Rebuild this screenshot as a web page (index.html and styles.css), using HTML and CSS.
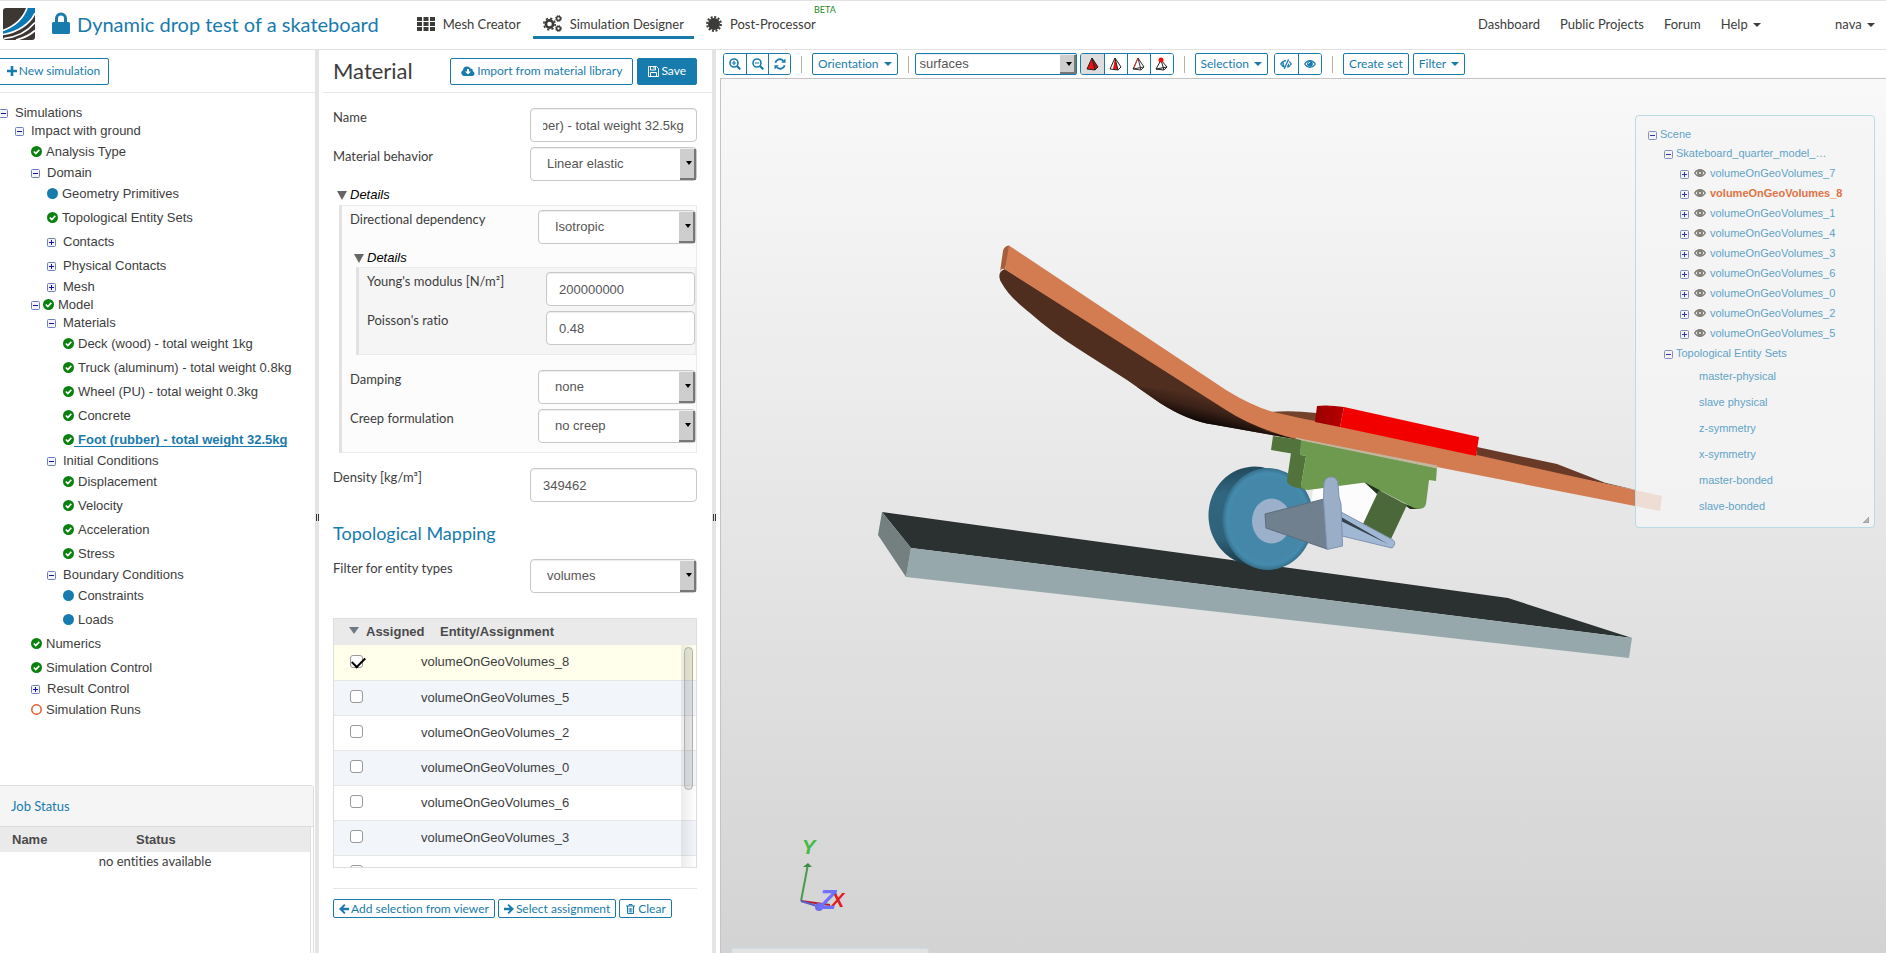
FILE: index.html
```
<!DOCTYPE html>
<html lang="en">
<head>
<meta charset="utf-8">
<title>Dynamic drop test of a skateboard</title>
<link rel="stylesheet" href="styles.css">
</head>
<body>
<svg class="defs" aria-hidden="true">
  <symbol id="lock" viewBox="0 0 18 22"><path d="M1.500 10H3V6.500a6 6 0 0 1 12 0V10h1.500A1.500 1.500 0 0 1 18 11.500v9a1.500 1.500 0 0 1-1.500 1.500h-15A1.500 1.500 0 0 1 0 20.500v-9A1.500 1.500 0 0 1 1.500 10zM6 10h6V6.500a3 3 0 0 0-6 0z"/></symbol>
  <symbol id="th" viewBox="0 0 18 14"><path d="M0 0h5v4H0zM6.500 0h5v4h-5zM13 0h5v4h-5zM0 5h5v4H0zM6.500 5h5v4h-5zM13 5h5v4h-5zM0 10h5v4H0zM6.500 10h5v4h-5zM13 10h5v4h-5z"/></symbol>
  <symbol id="cogs" viewBox="0 0 19 17"><g fill="none" stroke="currentColor"><circle cx="6.500" cy="9" r="3.600" stroke-width="2.600"/><circle cx="6.500" cy="9" r="5.700" stroke-width="1.600" stroke-dasharray="2.200 2.277"/><circle cx="15.500" cy="3.500" r="1.900" stroke-width="1.500"/><circle cx="15.500" cy="3.500" r="3" stroke-width="1" stroke-dasharray="1.200 1.156"/><circle cx="15.500" cy="13.500" r="1.900" stroke-width="1.500"/><circle cx="15.500" cy="13.500" r="3" stroke-width="1" stroke-dasharray="1.200 1.156"/></g></symbol>
  <symbol id="cert" viewBox="0 0 16 16"><circle cx="8" cy="8" r="6"/><circle cx="8" cy="8" r="6.800" fill="none" stroke="currentColor" stroke-width="2.200" stroke-dasharray="2 1.560"/></symbol>
  <symbol id="plus" viewBox="0 0 10 10"><path d="M3.700 0h2.600v3.700H10v2.600H6.300V10H3.700V6.300H0V3.700h3.700z"/></symbol>
  <symbol id="cloud" viewBox="0 0 14 10"><path fill-rule="evenodd" d="M3 10a3 3 0 0 1-1-5.700A4 4 0 0 1 9.500 2.500a2.200 2.200 0 0 1 2.300 2.700A2.500 2.500 0 0 1 11.500 10zM6 3v2.500H4L7 8.600l3-3.100H8V3z"/></symbol>
  <symbol id="save" viewBox="0 0 11 11"><g fill="none" stroke="currentColor"><path d="M.5.5h8l2 2v8H.5z"/><path d="M2.500.500v3.500h5V.500M2.500 10.500V6.500h6v4M6 1v2"/></g></symbol>
  <symbol id="zoomin" viewBox="0 0 12 12"><g fill="none" stroke="currentColor"><circle cx="5" cy="5" r="4" stroke-width="1.600"/><path d="M8 8l3.300 3.300" stroke-width="2.200"/><path d="M2.800 5h4.400M5 2.800v4.400" stroke-width="1.200"/></g></symbol>
  <symbol id="zoomout" viewBox="0 0 12 12"><g fill="none" stroke="currentColor"><circle cx="5" cy="5" r="4" stroke-width="1.600"/><path d="M8 8l3.300 3.300" stroke-width="2.200"/><path d="M2.800 5h4.400" stroke-width="1.200"/></g></symbol>
  <symbol id="refresh" viewBox="0 0 12 12"><path fill="none" stroke="currentColor" stroke-width="1.800" d="M1.300 4.800a4.700 4.700 0 0 1 8-2M10.700 7.200a4.700 4.700 0 0 1-8 2"/><path d="M11.500.500v4.300H7.200zM.500 11.500V7.200h4.300z"/></symbol>
  <symbol id="eye" viewBox="0 0 12 8"><path fill="none" stroke="currentColor" stroke-width="1.200" d="M.7 4C2 1.800 3.800.700 6 .700S10 1.800 11.300 4C10 6.200 8.200 7.300 6 7.300S2 6.200.700 4z"/><circle cx="6" cy="3.800" r="2.900"/><path d="M4.500 3.800A1.500 1.500 0 0 1 6 2.300" fill="none" stroke="#fff" stroke-width=".8"/></symbol>
  <symbol id="view" viewBox="0 0 12 8"><path fill="none" stroke="currentColor" stroke-width="1.400" d="M.7 4C2 1.800 3.800.700 6 .700S10 1.800 11.300 4C10 6.200 8.200 7.300 6 7.300S2 6.200.700 4z"/><circle cx="6" cy="4" r="2" fill="none" stroke="currentColor" stroke-width="2"/></symbol>
  <symbol id="eyeoff" viewBox="0 0 12 10"><path fill="none" stroke="currentColor" stroke-width="1.200" d="M5 8.200C3.300 8 1.800 6.800.700 5 2 2.800 3.800 1.700 6 1.700M9 2.600c.9.600 1.700 1.400 2.300 2.400-1 1.700-2.300 2.800-4 3.200M3.600 3.400a2.600 2.600 0 0 0 .6 3.600M8.600 4.600a2.600 2.600 0 0 1-1.300 2.700"/><path stroke="currentColor" stroke-width="1.300" d="M8.600.3L4.200 9.800"/></symbol>
  <symbol id="left" viewBox="0 0 10 10"><path d="M5.200 0l1.300 1.300L4.200 3.700H10v2.600H4.200l2.300 2.400L5.200 10 0 5z"/></symbol>
  <symbol id="right" viewBox="0 0 10 10"><path d="M4.800 0L3.500 1.300l2.300 2.400H0v2.600h5.800L3.500 8.700 4.800 10 10 5z"/></symbol>
  <symbol id="trash" viewBox="0 0 9 10"><g fill="none" stroke="currentColor"><path d="M0 2h9M3 2V.500h3V2M1.500 2v7.500h6V2"/><path d="M3.200 4v4.500M4.500 4v4.500M5.800 4v4.500" stroke-width=".8"/></g></symbol>
  <symbol id="ok" viewBox="0 0 11 11"><circle cx="5.500" cy="5.500" r="5.500" fill="#0a810f"/><path d="M2.800 5.500l2 2 3.500-3.600" fill="none" stroke="#fff" stroke-width="1.600"/></symbol>
  <symbol id="dot" viewBox="0 0 11 11"><circle cx="5.500" cy="5.500" r="5.500" fill="#187bad"/></symbol>
  <symbol id="ring" viewBox="0 0 11 11"><circle cx="5.500" cy="5.500" r="4.700" fill="none" stroke="#df5a26" stroke-width="1.500"/></symbol>
  <symbol id="minus-box" viewBox="0 0 9 9"><rect x=".5" y=".5" width="8" height="8" rx="1" fill="#f2f2f8" stroke="#6f7fb8"/><path d="M2 4.500h5" stroke="#1414a8"/></symbol>
  <symbol id="plus-box" viewBox="0 0 9 9"><rect x=".5" y=".5" width="8" height="8" rx="1" fill="#f2f2f8" stroke="#6f7fb8"/><path d="M2 4.500h5M4.500 2v5" stroke="#1414a8"/></symbol>
</svg>

<header class="topbar">
  <svg class="logo" viewBox="0 0 32 32" role="img" aria-label="Logo"><rect width="32" height="32" rx="3" fill="#3d3733"/><path d="M23 0h9v4C27 16 15 24 0 26v-4C12 18 20 10 23 0z" fill="#0c79b5"/><path d="M24 0C20 11 12 18 0 22.500M32 5C27 16 15 24 0 26.500M32 14.500C25 23 15 29 1 30.500M32 22.500C27 27 21 30 13 32" fill="none" stroke="#fff" stroke-width="1.700"/></svg>
  <svg class="i-lock"><use href="#lock"/></svg>
  <h1>Dynamic drop test of a skateboard</h1>
  <nav class="modes">
    <a href="#mesh"><svg class="i18x14"><use href="#th"/></svg>Mesh Creator</a>
    <a href="#sim" class="active"><svg class="i-cogs"><use href="#cogs"/></svg>Simulation Designer</a>
    <a href="#post"><svg class="i-cert"><use href="#cert"/></svg>Post-Processor<sup>BETA</sup></a>
  </nav>
  <nav class="links">
    <a href="#dashboard">Dashboard</a><a href="#projects">Public Projects</a><a href="#forum">Forum</a><a href="#help">Help <i class="caret"></i></a>
    <a href="#user" class="user">nava <i class="caret"></i></a>
  </nav>
</header>

<main class="panes">
  <aside class="left">
    <div class="bar"><button class="btn new"><svg class="i10"><use href="#plus"/></svg>New simulation</button></div>
    <ul class="tree">
      <li><div class="row"><svg class="tg"><use href="#minus-box"/></svg><a href="#t">Simulations</a></div>
      <ul>
        <li><div class="row"><svg class="tg"><use href="#minus-box"/></svg><a href="#t">Impact with ground</a></div>
        <ul>
          <li class="row leaf"><svg class="st"><use href="#ok"/></svg><a href="#t">Analysis Type</a></li>
          <li><div class="row"><svg class="tg"><use href="#minus-box"/></svg><a href="#t">Domain</a></div>
          <ul>
            <li class="row leaf"><svg class="st"><use href="#dot"/></svg><a href="#t">Geometry Primitives</a></li>
            <li class="row leaf"><svg class="st"><use href="#ok"/></svg><a href="#t">Topological Entity Sets</a></li>
            <li class="row leaf"><svg class="tg"><use href="#plus-box"/></svg><a href="#t">Contacts</a></li>
            <li class="row leaf"><svg class="tg"><use href="#plus-box"/></svg><a href="#t">Physical Contacts</a></li>
            <li class="row"><svg class="tg"><use href="#plus-box"/></svg><a href="#t">Mesh</a></li>
          </ul></li>
          <li><div class="row"><svg class="tg"><use href="#minus-box"/></svg><svg class="st"><use href="#ok"/></svg><a href="#t">Model</a></div>
          <ul>
            <li><div class="row"><svg class="tg"><use href="#minus-box"/></svg><a href="#t">Materials</a></div>
            <ul>
              <li class="row leaf"><svg class="st"><use href="#ok"/></svg><a href="#t">Deck (wood) - total weight 1kg</a></li>
              <li class="row leaf"><svg class="st"><use href="#ok"/></svg><a href="#t">Truck (aluminum) - total weight 0.8kg</a></li>
              <li class="row leaf"><svg class="st"><use href="#ok"/></svg><a href="#t">Wheel (PU) - total weight 0.3kg</a></li>
              <li class="row leaf"><svg class="st"><use href="#ok"/></svg><a href="#t">Concrete</a></li>
              <li class="row leaf"><svg class="st"><use href="#ok"/></svg><a href="#t" class="sel">Foot (rubber) - total weight 32.5kg</a></li>
            </ul></li>
            <li><div class="row"><svg class="tg"><use href="#minus-box"/></svg><a href="#t">Initial Conditions</a></div>
            <ul>
              <li class="row leaf"><svg class="st"><use href="#ok"/></svg><a href="#t">Displacement</a></li>
              <li class="row leaf"><svg class="st"><use href="#ok"/></svg><a href="#t">Velocity</a></li>
              <li class="row leaf"><svg class="st"><use href="#ok"/></svg><a href="#t">Acceleration</a></li>
              <li class="row leaf"><svg class="st"><use href="#ok"/></svg><a href="#t">Stress</a></li>
            </ul></li>
            <li><div class="row"><svg class="tg"><use href="#minus-box"/></svg><a href="#t">Boundary Conditions</a></div>
            <ul>
              <li class="row leaf"><svg class="st"><use href="#dot"/></svg><a href="#t">Constraints</a></li>
              <li class="row leaf"><svg class="st"><use href="#dot"/></svg><a href="#t">Loads</a></li>
            </ul></li>
          </ul></li>
          <li class="row leaf"><svg class="st"><use href="#ok"/></svg><a href="#t">Numerics</a></li>
          <li class="row leaf"><svg class="st"><use href="#ok"/></svg><a href="#t">Simulation Control</a></li>
          <li class="row"><svg class="tg"><use href="#plus-box"/></svg><a href="#t">Result Control</a></li>
          <li class="row leaf"><svg class="st"><use href="#ring"/></svg><a href="#t">Simulation Runs</a></li>
        </ul></li>
      </ul></li>
    </ul>
    <section class="jobs">
      <h2>Job Status</h2>
      <div class="jobs-body">
        <table>
          <thead><tr><th>Name</th><th>Status</th></tr></thead>
          <tbody><tr><td colspan="2">no entities available</td></tr></tbody>
        </table>
      </div>
    </section>
  </aside>
  <div class="split"></div>

  <section class="middle">
    <div class="bar mid-bar">
      <h2>Material</h2>
      <button class="btn import"><svg class="i-cloud"><use href="#cloud"/></svg>Import from material library</button>
      <button class="btn primary"><svg class="i11"><use href="#save"/></svg>Save</button>
    </div>
    <form class="form">
      <div class="field"><label for="name">Name</label><input id="name" type="text" value="Foot (rubber) - total weight 32.5kg"></div>
      <div class="field"><label for="beh">Material behavior</label><span class="pick"><select id="beh"><option>Linear elastic</option></select></span></div>
      <div class="toggle">Details</div>
      <div class="box">
        <div class="field"><label for="dir">Directional dependency</label><span class="pick"><select id="dir"><option>Isotropic</option></select></span></div>
        <div class="toggle">Details</div>
        <div class="box inner">
          <div class="field"><label for="young">Young's modulus [N/m²]</label><input id="young" type="text" value="200000000"></div>
          <div class="field"><label for="poi">Poisson's ratio</label><input id="poi" type="text" value="0.48"></div>
        </div>
        <div class="field"><label for="damp">Damping</label><span class="pick"><select id="damp"><option>none</option></select></span></div>
        <div class="field"><label for="creep">Creep formulation</label><span class="pick"><select id="creep"><option>no creep</option></select></span></div>
      </div>
      <div class="field"><label for="dens">Density [kg/m³]</label><input id="dens" type="text" value="349462"></div>
      <h3>Topological Mapping</h3>
      <div class="field"><label for="filt">Filter for entity types</label><span class="pick"><select id="filt"><option>volumes</option></select></span></div>
      <div class="grid">
        <table>
          <thead><tr><th><i class="sort"></i>Assigned</th><th>Entity/Assignment</th></tr></thead>
          <tbody>
            <tr class="on"><td><input id="v8" type="checkbox" checked></td><td><label for="v8">volumeOnGeoVolumes_8</label></td></tr>
            <tr><td><input id="v5" type="checkbox"></td><td><label for="v5">volumeOnGeoVolumes_5</label></td></tr>
            <tr><td><input id="v2" type="checkbox"></td><td><label for="v2">volumeOnGeoVolumes_2</label></td></tr>
            <tr><td><input id="v0" type="checkbox"></td><td><label for="v0">volumeOnGeoVolumes_0</label></td></tr>
            <tr><td><input id="v6" type="checkbox"></td><td><label for="v6">volumeOnGeoVolumes_6</label></td></tr>
            <tr><td><input id="v3" type="checkbox"></td><td><label for="v3">volumeOnGeoVolumes_3</label></td></tr>
            <tr><td><input id="v4" type="checkbox" aria-label="volume"></td><td></td></tr>
          </tbody>
        </table>
        <div class="track"><div class="thumb"></div></div>
      </div>
      <div class="actions">
        <button type="button" class="btn small"><svg class="i10"><use href="#left"/></svg>Add selection from viewer</button>
        <button type="button" class="btn small"><svg class="i10"><use href="#right"/></svg>Select assignment</button>
        <button type="button" class="btn small"><svg class="i-trash"><use href="#trash"/></svg>Clear</button>
      </div>
    </form>
  </section>
  <div class="split"></div>

  <section class="viewer">
    <div class="tools">
      <div class="group"><button aria-label="Zoom in"><svg class="i12"><use href="#zoomin"/></svg></button><button aria-label="Zoom out"><svg class="i12"><use href="#zoomout"/></svg></button><button aria-label="Reset view"><svg class="i12"><use href="#refresh"/></svg></button></div>
      <i class="sep"></i>
      <button class="btn tool">Orientation <i class="caret"></i></button>
      <i class="sep"></i>
      <span class="pick entity"><select aria-label="Entity type"><option>surfaces</option></select></span>
      <div class="group shapes">
        <button class="down" aria-label="Surfaces"><svg class="i-tet" viewBox="0 0 13 14"><path d="M6 1L1 12l8 1z" fill="#e11"/><path d="M6 1l3 12 3-3z" fill="#a11"/><path d="M6 1L1 12l8 1 3-3zM6 1l3 12" fill="none" stroke="#222"/></svg></button>
        <button aria-label="Faces"><svg class="i-tet" viewBox="0 0 13 14"><path d="M6 1L4 12l5 1z" fill="#e11"/><path d="M6 1L1 12l8 1 3-3zM6 1l3 12" fill="none" stroke="#222"/></svg></button>
        <button aria-label="Edges"><svg class="i-tet" viewBox="0 0 13 14"><path d="M6 1L1 12l8 1 3-3zM6 1l3 12M1 12l11-2" fill="none" stroke="#333"/><path d="M6 1L2 11" stroke="#e33"/></svg></button>
        <button aria-label="Nodes"><svg class="i-tet" viewBox="0 0 13 14"><path d="M6 3L1 12l8 1 3-3zM6 3l3 10M1 12l11-2" fill="none" stroke="#222"/><circle cx="6" cy="3" r="2.500" fill="#e11"/></svg></button>
      </div>
      <i class="sep"></i>
      <button class="btn tool">Selection <i class="caret"></i></button>
      <div class="group eyes"><button aria-label="Hide"><svg class="i-off"><use href="#eyeoff"/></svg></button><button aria-label="Show"><svg class="i-eye"><use href="#eye"/></svg></button></div>
      <i class="sep"></i>
      <button class="btn tool set">Create set</button>
      <button class="btn tool filter">Filter <i class="caret"></i></button>
    </div>
    <div class="canvas">
      <svg class="model" viewBox="721 79 1165 874" preserveAspectRatio="xMidYMid meet">
        <defs>
          <linearGradient id="under" gradientUnits="userSpaceOnUse" x1="1190" y1="394" x2="1183" y2="422"><stop offset="0" stop-color="#4f2d1f"/><stop offset=".4" stop-color="#3a2117"/><stop offset="1" stop-color="#000"/></linearGradient>
          <linearGradient id="redside"><stop offset="0" stop-color="#9a0000"/><stop offset="1" stop-color="#b80000"/></linearGradient>
          <linearGradient id="tire" x1="0" y1="0" x2="0" y2="1"><stop offset="0" stop-color="#234a5d"/><stop offset=".25" stop-color="#316680"/><stop offset=".7" stop-color="#2f627a"/><stop offset="1" stop-color="#193746"/></linearGradient>
          <radialGradient id="face"><stop offset=".8" stop-color="#4487a8"/><stop offset=".9" stop-color="#458bad"/><stop offset="1" stop-color="#366f8a"/></radialGradient>
        </defs>
        <path d="M882 512L1508 598L1632 638L911 548z" fill="#2b3130"/>
        <path d="M911 548L1632 638L1629 658L906 577z" fill="#96a8ab"/>
        <path d="M882 512L911 548L906 577L878 535z" fill="#748080"/>
        <path d="M1270 412Q1292 410 1316 413V424z" fill="#74412b"/>
        <path d="M1477 447L1557 464L1605 482.700L1640 491L1476 457z" fill="#693a27"/>
        <path d="M1005 269C999 271 998 276 1001 282C1008 295 1020 305 1030 313Q1050 331 1080 350L1127 380L1160 403Q1188 421 1213 424.500L1300 440L1226 408z" fill="#4f2d1f"/>
        <path d="M1137 387L1160 403Q1188 421 1213 424.500L1300 440L1266 431L1200 393z" fill="url(#under)"/>
        <path d="M1009 245.500Q1004 246 1003 251L1000 272Q1001 268 1005 269L1010 249z" fill="#a65f3d"/>
        <path d="M1009 245.500L1226 390Q1250 405 1273 412C1290 416 1320 422 1343 427L1477 455L1607 484L1662 496L1660 511L1635 506L1437 467L1300 440Q1255 429 1226 410L1005 269.500z" fill="#d37c51"/>
        <path d="M1317 406Q1328 404.500 1344 407L1340 427L1315 422z" fill="url(#redside)"/>
        <path d="M1344 407L1479 437L1476 456L1340 427z" fill="#f20000"/>
        <path d="M1313 489L1365 482L1378 492L1364 523L1330 512L1311 505z" fill="#fcfcfc"/>
        <path d="M1363 481L1382 489L1377 494zM1402 503L1420 509L1410 509z" fill="#22331a"/>
        <path d="M1379 490L1407 505L1391 539L1363 524z" fill="#4a683a"/>
        <ellipse cx="1255" cy="516" rx="46.500" ry="49.500" fill="url(#tire)" transform="rotate(-5 1255 516)"/>
        <ellipse cx="1268" cy="519" rx="45.500" ry="51" fill="url(#face)"/>
        <ellipse cx="1271.500" cy="521" rx="19.500" ry="22.500" fill="#9bb0ca"/>
        <path d="M1273 436L1302 440L1300 455L1271 450zM1291 453L1306 456L1301 486L1307 489.500Q1286 487 1287 480z" fill="#52743c"/>
        <path d="M1301 440L1437 467L1436 481L1429 480L1426 504Q1424 511 1414 508L1365 482.500L1308 490Q1300 489 1301 485L1306 456L1300 455z" fill="#6e9a4f"/>
        <path d="M1296 438L1302 440L1437 468V466L1300 439z" fill="#c2b79f" stroke="#c2b79f"/>
        <path d="M1341 512L1393 540Q1397 543 1392 548L1342 536z" fill="#a0b8d4" stroke="#8193b0"/>
        <path d="M1341 517L1388 544L1341 521z" fill="#34404a"/>
        <path d="M1265 514L1324 499L1327 549L1266 528z" fill="#70808f" stroke="#5d6c7e"/>
        <path d="M1324 484A7 7 0 0 1 1338 484L1339 497L1341 504L1342.500 546L1327 549.500L1323.500 500z" fill="#9aaec8" stroke="#7f93b5"/>
        <g fill="none" stroke-width="2"><path d="M801 901L807.500 867" stroke="#4a9a4f"/><path d="M803 867l5-4 4 4z" fill="#3f8a44"/><path d="M801 901l29 4" stroke="#b81c26"/><path d="M801 901l19 6" stroke="#5e5ecb"/></g>
        <circle cx="819" cy="907" r="4" fill="#6c6ce8"/>
        <text class="axis" x="831" y="907" fill="#e31b1b">X</text>
        <text class="axis" x="802" y="854" fill="#41bb41">Y</text>
        <text class="axis z" x="819" y="909" fill="#7070ff">Z</text>
      </svg>
      <div class="scene">
        <ul>
          <li><div class="srow"><svg class="tg"><use href="#minus-box"/></svg><a href="#s">Scene</a></div>
          <ul>
            <li><div class="srow"><svg class="tg"><use href="#minus-box"/></svg><a href="#s">Skateboard_quarter_model_…</a></div>
            <ul class="vols">
              <li class="srow"><svg class="tg"><use href="#plus-box"/></svg><svg class="vi"><use href="#view"/></svg><a href="#s">volumeOnGeoVolumes_7</a></li>
              <li class="srow"><svg class="tg"><use href="#plus-box"/></svg><svg class="vi"><use href="#view"/></svg><a href="#s" class="hot">volumeOnGeoVolumes_8</a></li>
              <li class="srow"><svg class="tg"><use href="#plus-box"/></svg><svg class="vi"><use href="#view"/></svg><a href="#s">volumeOnGeoVolumes_1</a></li>
              <li class="srow"><svg class="tg"><use href="#plus-box"/></svg><svg class="vi"><use href="#view"/></svg><a href="#s">volumeOnGeoVolumes_4</a></li>
              <li class="srow"><svg class="tg"><use href="#plus-box"/></svg><svg class="vi"><use href="#view"/></svg><a href="#s">volumeOnGeoVolumes_3</a></li>
              <li class="srow"><svg class="tg"><use href="#plus-box"/></svg><svg class="vi"><use href="#view"/></svg><a href="#s">volumeOnGeoVolumes_6</a></li>
              <li class="srow"><svg class="tg"><use href="#plus-box"/></svg><svg class="vi"><use href="#view"/></svg><a href="#s">volumeOnGeoVolumes_0</a></li>
              <li class="srow"><svg class="tg"><use href="#plus-box"/></svg><svg class="vi"><use href="#view"/></svg><a href="#s">volumeOnGeoVolumes_2</a></li>
              <li class="srow"><svg class="tg"><use href="#plus-box"/></svg><svg class="vi"><use href="#view"/></svg><a href="#s">volumeOnGeoVolumes_5</a></li>
            </ul></li>
            <li><div class="srow"><svg class="tg"><use href="#minus-box"/></svg><a href="#s">Topological Entity Sets</a></div>
            <ul class="sets">
              <li><a href="#s">master-physical</a></li><li><a href="#s">slave physical</a></li><li><a href="#s">z-symmetry</a></li><li><a href="#s">x-symmetry</a></li><li><a href="#s">master-bonded</a></li><li><a href="#s">slave-bonded</a></li>
            </ul></li>
          </ul></li>
        </ul>
        <svg class="grip" viewBox="0 0 6 6"><path d="M6 0v6H0z" fill="#b5b5b5" stroke="#888" stroke-width=".6"/></svg>
      </div>
      <div class="drawer"></div>
    </div>
  </section>
</main>
<script src="main.js"></script>
</body>
</html>
```
FILE: styles.css
```
* { box-sizing: border-box; }
body {
  margin: 0;
  height: 100vh;
  display: flex;
  flex-direction: column;
  overflow: hidden;
  background: #fff;
  color: #3d3d3d;
  font: 13px/20px Lato, sans-serif;
  font-variant-ligatures: none;
}
h1, h2, h3, ul, table { margin: 0; padding: 0; font-weight: 400; }
ul { list-style: none; }
a { color: inherit; text-decoration: none; }
svg { display: block; flex: none; fill: currentColor; }
button { font: inherit; font-variant-ligatures: none; cursor: pointer; }
.defs { position: absolute; width: 0; height: 0; }

.topbar {
  flex: none;
  height: 50px;
  display: flex;
  align-items: center;
  padding: 0 11px 2px 3px;
  border-top: 1px solid #e2e2e2;
  border-bottom: 1px solid #e2e2e2;
}
.logo { width: 32px; height: 32px; }
.i-lock { width: 18px; height: 22px; margin: 0 7px 2px 17px; color: #187bad; }
h1 { font-size: 20px; line-height: 28px; color: #187bad; }
.modes { display: flex; margin-left: 28px; color: #3b3b38; }
.modes a {
  position: relative;
  display: flex;
  align-items: center;
  height: 30px;
  padding: 2px 10px 0;
  gap: 8px;
  border-bottom: 3px solid transparent;
}
.modes a + a { margin-left: 2px; }
.modes a.active { border-color: #187bad; }
.modes sup { position: absolute; right: -10px; top: -5px; font-size: 9px; line-height: 12px; color: #1c8a24; }
.i18x14 { width: 18px; height: 14px; }
.i-cogs { width: 19px; height: 17px; }
.i-cert { width: 16px; height: 16px; }
.links { display: flex; gap: 20px; margin-left: auto; }
.links .user { margin-left: 54px; }
.caret { display: inline-block; margin-left: 2px; border: 4px solid transparent; border-top-color: currentColor; border-bottom: 0; vertical-align: 2px; }

.panes { flex: 1; display: flex; min-height: 0; }
.split { flex: 0 0 4px; background: linear-gradient(#333, #333) 1px 464px / 1px 7px no-repeat, linear-gradient(#333, #333) 3px 464px / 1px 7px no-repeat, #e4e4e4; }
.left { flex: 0 0 315px; display: flex; flex-direction: column; }
.middle { flex: 0 0 393px; }
.viewer { flex: 1; display: flex; flex-direction: column; min-width: 0; padding-left: 4px; }

.bar { flex: none; display: flex; align-items: center; height: 43px; border-bottom: 1px solid #e6e6e6; }
.mid-bar { margin-left: 4px; padding: 0 15px 0 10px; gap: 4px; }
.mid-bar h2 { flex: 1; font-size: 22px; line-height: 28px; }
.btn {
  display: flex;
  align-items: center;
  justify-content: center;
  gap: 2px;
  height: 27px;
  padding: 0 10px;
  border: 1px solid #187bad;
  border-radius: 2px;
  background: #fff;
  color: #187bad;
  font-size: 12px;
  line-height: 18px;
  white-space: nowrap;
}
.btn.new { width: 111px; margin-left: -2px; padding: 0 5px; }
.btn.primary { background: #187bad; color: #fff; }
.btn.small { height: 19px; padding: 0 5px; }
.i10 { width: 10px; height: 10px; }
.i11 { width: 11px; height: 11px; }
.i12 { width: 12px; height: 12px; }
.i-cloud { width: 14px; height: 10px; }
.i-trash { width: 9px; height: 10px; margin: 0 1px; }

.tree { flex: 1; margin: 11px 0 0 -1px; font: 13px/18px "Liberation Sans", Arial, sans-serif; }
.tree ul { padding-left: 16px; }
.row { display: flex; align-items: center; height: 18px; white-space: nowrap; }
.row.leaf { height: 24px; }
.tg { width: 9px; height: 9px; margin-top: 1px; }
.tg + a { margin-left: 7px; }
.tg + .st { margin-left: 3px; }
.st { width: 11px; height: 11px; margin-bottom: 1px; }
.st + a { padding: 0 0 1px 4px; line-height: 15px; }
.st + .sel { padding-bottom: 0; color: #187bad; font-weight: 700; line-height: 13px; border-bottom: 1px solid #187bad; }

.jobs { flex: 0 0 168px; display: flex; flex-direction: column; border-top: 1px solid #dcdcdc; border-right: 1px solid #dcdcdc; margin-right: 1px; border-top-right-radius: 3px; }
.jobs h2 { flex: none; height: 41px; padding-left: 11px; font-size: 13px; line-height: 40px; color: #187bad; background: #f5f5f5; border-bottom: 1px solid #dcdcdc; }
.jobs-body { flex: 1; margin-right: 2px; border-right: 1px solid #dcdcdc; }
.jobs table { width: 100%; border-collapse: collapse; table-layout: fixed; }
.jobs th { height: 25px; padding: 0 12px; text-align: left; font: bold 13px/18px "Liberation Sans", Arial, sans-serif; color: #4a4a4a; background: #eaeaea; }
.jobs th:first-child { width: 124px; }
.jobs td { padding: 0; line-height: 18px; text-align: center; }

.form { padding: 15px 15px 0 14px; }
.field { display: flex; justify-content: space-between; height: 34px; margin-bottom: 5px; }
.field label { line-height: 18px; }
.form input[type="text"], .pick, .pick select { height: 34px; }
.form input[type="text"], .pick { width: 167px; }
.form input[type="text"], .pick select {
  border: 1px solid #c8c8c8;
  border-radius: 4px;
  background: #fff;
  color: #555;
  box-shadow: inset 0 1px 1px #eee;
  font: 13px/18px "Liberation Sans", Arial, sans-serif;
}
.form input[type="text"] { padding: 0 12px; }
.pick { position: relative; }
.pick select { display: block; width: 100%; padding: 0 16px; appearance: none; }
.pick::before { content: ""; position: absolute; right: 1px; top: 2px; bottom: 1px; width: 14px; background: #cecece; border: solid #777; border-width: 0 2px 2px 0; pointer-events: none; }
.pick::after { content: ""; position: absolute; right: 5px; top: 14px; border: 3px solid transparent; border-top: 4px solid #000; border-bottom: 0; pointer-events: none; }
.toggle { display: flex; align-items: center; gap: 3px; height: 18px; margin: 0 0 1px 4px; font: italic 13px/18px "Liberation Sans", Arial, sans-serif; color: #000; }
.toggle::before { content: ""; border: 5px solid transparent; border-top: 9px solid #666; border-bottom: 0; }
.box { margin: 0 0 15px 6px; padding: 4px 0 4px 8px; background: #fcfcfc; border: 1px solid #ebebeb; border-left: 3px solid #e2e2e2; }
.box input[type="text"], .box .pick { width: 158px; }
.box .toggle { margin-bottom: 0; }
.box .inner { background: #f5f5f5; }
.inner.box input[type="text"] { width: 149px; }
h3 { margin: 20px 0 15px; font-size: 18px; line-height: 22px; color: #187bad; }

.grid { position: relative; height: 250px; margin-top: 25px; overflow: hidden; border: 1px solid #dedede; font: 13px/18px "Liberation Sans", Arial, sans-serif; }
.grid table { width: 100%; border-collapse: collapse; table-layout: fixed; }
.grid th { height: 26px; padding: 0 0 0 19px; text-align: left; background: #eaeaea; color: #4a4a4a; }
.grid th:first-child { width: 87px; padding: 0; white-space: nowrap; text-indent: 15px; }
.grid td { height: 35px; padding: 0; border-bottom: 1px solid #e6e6e6; }
.grid tr.on { background: #ffffec; }
.grid tr:nth-child(even) { background: #f2f6fb; }
.grid input { display: block; appearance: none; width: 13px; height: 13px; margin: 0 0 2px 16px; border: 1px solid #999; border-radius: 3px; background: #fff; }
.grid .on input::before { content: ""; display: block; width: 11px; height: 6px; margin: 1px 0 0 1px; border: solid #000; border-width: 0 0 2px 2px; transform: rotate(-45deg); }
.sort { display: inline-block; margin-right: 7px; border: 5px solid transparent; border-top: 7px solid #6f7a86; border-bottom: 0; vertical-align: 2px; }
.track { position: absolute; right: 0; top: 26px; bottom: 0; width: 15px; padding: 2px 3px; background: linear-gradient(90deg, rgba(0, 0, 0, .08), rgba(0, 0, 0, 0)); }
.thumb { height: 143px; border: 1px solid #b0b0b0; border-radius: 5px; background: rgba(0, 0, 0, .09); }
.actions { display: flex; gap: 3px; margin-top: 20px; padding-top: 10px; border-top: 1px solid #e4e4e4; }

.tools { flex: none; display: flex; align-items: center; height: 28px; padding: 3px 0 3px 3px; white-space: nowrap; }
.group { display: flex; height: 22px; border: 1px solid #187bad; border-radius: 3px; overflow: hidden; color: #187bad; }
.group button { display: grid; place-items: center; width: 22px; padding: 0; border: 0; background: #fff; color: inherit; }
.group button + button { border-left: 1px solid #187bad; }
.shapes button, .eyes button { width: 23px; }
.group .down { background: #ddd; }
.i-tet { width: 13px; height: 14px; }
.i-eye { width: 12px; height: 8px; }
.i-off { width: 12px; height: 10px; }
.sep { width: 1px; height: 17px; margin: 0 10px; background: #b9b3a6; }
.btn.tool { height: 22px; padding: 0 5px; gap: 3px; }
.eyes { margin-left: 6px; }
.filter { margin-left: 4px; }
.pick.entity { width: 162px; height: 22px; margin: 0 3px 0 -4px; }
.entity select { height: 22px; padding: 0 4px; border-color: #187bad; border-radius: 2px; }
.entity.pick::after { top: 9px; }

.canvas { flex: 1; position: relative; min-height: 0; border: solid #c4c4c4; border-width: 1px 0 0 1px; background: linear-gradient(#f9f9f9, #d3d3d3); }
.model { width: 100%; height: 100%; }
.axis { font: italic bold 20px "Liberation Sans", Arial, sans-serif; }
.axis.z { font-size: 28px; }
.scene { position: absolute; top: 36px; right: 11px; width: 240px; padding: 9px 0 8px 12px; border: 1px solid #b9dbe6; border-radius: 4px; background: rgba(245, 245, 245, .8); color: #62a3c6; font: 11px/18px "Liberation Sans", Arial, sans-serif; }
.scene ul ul { padding-left: 16px; }
.srow { display: flex; align-items: center; height: 19px; }
.srow .tg { margin-top: 2px; opacity: .85; }
.srow a { padding-bottom: 2px; }
.scene .vols { padding-top: 1px; }
.vols .srow { height: 20px; }
.vols .srow .tg { margin-top: 1px; }
.srow .tg + a { margin-left: 3px; }
.vi { width: 12px; height: 8px; margin: 0 4px 2px 5px; color: #7d7d74; }
.hot { color: #df7343; font-weight: 700; }
.scene .sets { padding-left: 35px; }
.sets li { height: 26px; line-height: 26px; }
.grip { position: absolute; right: 5px; bottom: 4px; width: 6px; height: 6px; }
.drawer { position: absolute; left: 10px; bottom: 0; width: 198px; height: 5px; border: 1px solid #c9dde6; border-bottom: 0; border-radius: 3px 3px 0 0; background: #e3e3e3; }
```
FILE: main.js
```
// Show the end of a long material name.
const nameField = document.getElementById("name");
nameField.scrollLeft = nameField.scrollWidth;
```
